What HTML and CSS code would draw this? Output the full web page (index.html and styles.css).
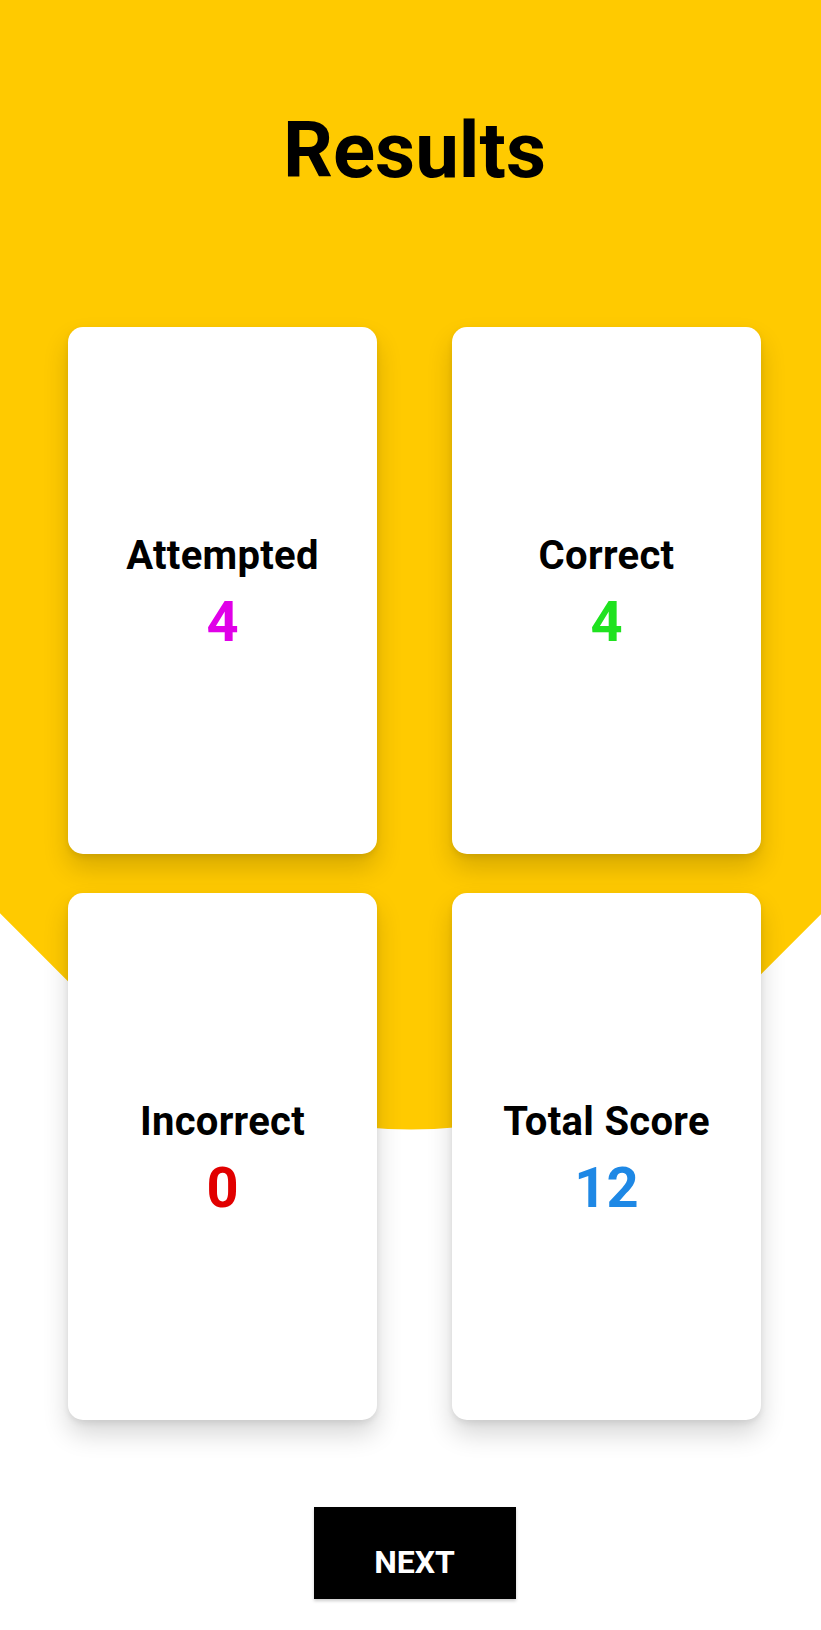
FILE: index.html
```html
<!DOCTYPE html>
<html lang="en">
<head>
<meta charset="utf-8">
<title>Results</title>
<link rel="stylesheet" href="styles.css">
</head>
<body>
<div class="screen">
  <h1 class="title">Results</h1>
  <div class="grid">
    <div class="card">
      <div class="label">Attempted</div>
      <div class="value attempted">4</div>
    </div>
    <div class="card">
      <div class="label">Correct</div>
      <div class="value correct">4</div>
    </div>
    <div class="card">
      <div class="label">Incorrect</div>
      <div class="value incorrect">0</div>
    </div>
    <div class="card">
      <div class="label">Total Score</div>
      <div class="value total">12</div>
    </div>
  </div>
  <div class="actions">
    <button class="next">NEXT</button>
  </div>
</div>
</body>
</html>
```

FILE: styles.css
```css
html, body {
  margin: 0;
  padding: 0;
  background: #ffffff;
}

.screen {
  position: relative;
  width: 821px;
  height: 1630px;
  overflow: hidden;
  font-family: Roboto, "Liberation Sans", Arial, sans-serif;
  color: #000;
  display: flex;
  flex-direction: column;
}

/* decorative yellow backdrop: a rotated rounded square */
.screen::before {
  content: "";
  position: absolute;
  width: 1300px;
  height: 1300px;
  left: -239.5px;
  top: -245px;
  background: #ffca00;
  border-radius: 470px;
  transform: rotate(45deg);
  z-index: 0;
}

.title {
  position: relative;
  z-index: 1;
  margin: 0;
  padding: 104px 0 0 8px;
  height: 327px;
  box-sizing: border-box;
  text-align: center;
  font-size: 78px;
  font-weight: 700;
  line-height: 1.2;
}

.grid {
  position: relative;
  z-index: 1;
  display: grid;
  grid-template-columns: 309px 309px;
  grid-template-rows: 527px 527px;
  column-gap: 75px;
  row-gap: 39px;
  padding: 0 60px 0 68px;
}

.card {
  background: #ffffff;
  border-radius: 15px;
  box-shadow: 0 14px 26px rgba(0, 0, 0, 0.16), 0 3px 6px rgba(0, 0, 0, 0.08);
  display: flex;
  flex-direction: column;
  align-items: center;
  justify-content: center;
  padding-top: 6px;
  box-sizing: border-box;
}

.label {
  font-size: 40px;
  font-weight: 700;
  line-height: 46px;
  letter-spacing: 0.3px;
}

.value {
  margin-top: 11px;
  font-size: 56px;
  font-weight: 700;
  line-height: 64px;
}

.attempted { color: #e000e8; }
.correct { color: #1fe21f; }
.incorrect { color: #e10000; }
.total { color: #1e88e5; }

.actions {
  position: relative;
  z-index: 1;
  display: flex;
  justify-content: center;
  padding: 87px 0 0 8px;
}

.next {
  width: 202px;
  height: 92px;
  border: none;
  border-radius: 0;
  background: #000000;
  color: #ffffff;
  font-family: Roboto, "Liberation Sans", Arial, sans-serif;
  font-size: 32px;
  font-weight: 700;
  padding: 18px 0 0 0;
  box-sizing: border-box;
  box-shadow: 0 2px 3px rgba(0, 0, 0, 0.2);
}
```
